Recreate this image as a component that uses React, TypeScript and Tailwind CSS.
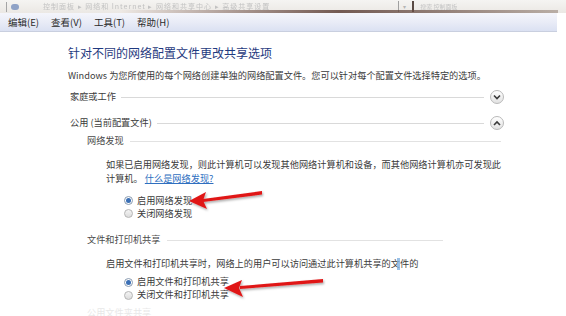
import React from 'react'

const cjk = { fontFamily: '"Noto Sans CJK SC", "Noto Sans", sans-serif' }

function Chevron({ up }: { up?: boolean }) {
  return (
    <div className="w-[14px] h-[14px] rounded-full border border-[#b9b9b9] bg-gradient-to-b from-[#ffffff] to-[#e2e2e2] flex items-center justify-center shrink-0">
      <svg width="8" height="6" viewBox="0 0 8 6">
        <path
          d={up ? 'M1 5 L4 2 L7 5' : 'M1 1.5 L4 4.5 L7 1.5'}
          fill="none"
          stroke="#3a3a3a"
          strokeWidth="1.6"
        />
      </svg>
    </div>
  )
}

function SectionRow({ label, up, end }: { label: string; up?: boolean; end: number }) {
  return (
    <div className="flex items-center h-[16px]" style={{ width: end }}>
      <span className="text-[9.2px] text-[#3b3b3b] whitespace-nowrap">{label}</span>
      <div className="flex-1 h-px bg-[#d9d9d9] ml-[5px] mr-[6px]"></div>
      <Chevron up={up} />
    </div>
  )
}

function GroupRow({ label, end }: { label: string; end: number }) {
  return (
    <div className="flex items-center h-[14px]" style={{ width: end }}>
      <span className="text-[9.2px] text-[#4a4a4a] whitespace-nowrap">{label}</span>
      <div className="flex-1 h-px bg-[#e2e2e2] ml-[6px]"></div>
    </div>
  )
}

function Radio({ checked, label }: { checked?: boolean; label: string }) {
  return (
    <div className="flex items-center h-[13px] gap-[4px]">
      <div
        className={
          checked
            ? 'w-[9px] h-[9px] rounded-full border border-[#8a9bb0] bg-white flex items-center justify-center'
            : 'w-[9px] h-[9px] rounded-full border border-[#b5b5b5] bg-gradient-to-b from-[#f4f4f4] to-[#dcdcdc]'
        }
      >
        {checked && <div className="w-[5px] h-[5px] rounded-full bg-[#3a6fb5]"></div>}
      </div>
      <span className="text-[9.2px] text-[#3b3b3b] whitespace-nowrap">{label}</span>
    </div>
  )
}

export default function App() {
  return (
    <div className="w-[566px] h-[316px] bg-white overflow-hidden relative" style={cjk}>
      {/* window chrome strip */}
      <div className="h-[13px] bg-gradient-to-b from-[#f5f4f2] to-[#ebe8e4] flex items-center relative overflow-hidden">
        <div className="w-px h-[10px] bg-[#a5a5a5] ml-[6px]"></div>
        <div className="w-[8px] h-[6px] bg-[#8fa2c6] ml-[4px] rounded-sm"></div>
        <span className="text-[7px] text-[#c2c2c2] ml-[24px] whitespace-nowrap tracking-[1px] blur-[0.4px]">
          控制面板 ▸ 网络和 Internet ▸ 网络和共享中心 ▸ 高级共享设置
        </span>
        <div className="w-px h-[11px] bg-[#a0a0a0] ml-[128px]"></div>
        <span className="text-[6px] text-[#b5b5b5] ml-[4px]">▾</span>
        <div className="w-[2px] h-[11px] bg-[#5a4a44] ml-[6px]"></div>
        <span className="text-[6px] text-[#c5c5c5] ml-[6px] whitespace-nowrap blur-[0.4px]">搜索 控制面板</span>
        <div className="absolute left-[120px] right-[8px] bottom-0 h-[3px] bg-gradient-to-r from-[#efe9e4] via-[#4a2a22] to-[#a89a90] opacity-75"></div>
      </div>

      {/* menu bar */}
      <div className="w-[557px] h-[19px] bg-gradient-to-b from-[#f4f5fb] via-[#e9ecf7] to-[#dbe1f2] border-b border-[#c9cfdf] flex items-center text-[9.5px] text-[#2a2a2a]">
        <span className="ml-[8px]">编辑(E)</span>
        <span className="ml-[12px]">查看(V)</span>
        <span className="ml-[12px]">工具(T)</span>
        <span className="ml-[12px]">帮助(H)</span>
      </div>

      {/* content */}
      <div className="pl-[68px]">
        <div className="mt-[13px] text-[12px] leading-[16px] text-[#1f3a80] whitespace-nowrap">
          针对不同的网络配置文件更改共享选项
        </div>
        <div className="mt-[7px] text-[9.2px] leading-[14px] text-[#3b3b3b] whitespace-nowrap">
          Windows 为您所使用的每个网络创建单独的网络配置文件。您可以针对每个配置文件选择特定的选项。
        </div>

        <div className="mt-[7px] ml-[2px]">
          <SectionRow label="家庭或工作" end={434} />
        </div>
        <div className="mt-[10px] ml-[2px]">
          <SectionRow label="公用 (当前配置文件)" up end={434} />
        </div>

        <div className="mt-[3px] ml-[19px]">
          <GroupRow label="网络发现" end={414} />
        </div>
        <div className="mt-[10px] ml-[38px] text-[9.2px] leading-[13.5px] text-[#3b3b3b] whitespace-nowrap">
          如果已启用网络发现，则此计算机可以发现其他网络计算机和设备，而其他网络计算机亦可发现此
          <br />
          计算机。 <span className="text-[#2f6fbf] underline">什么是网络发现?</span>
        </div>
        <div className="mt-[9px] ml-[56px]">
          <Radio checked label="启用网络发现" />
          <Radio label="关闭网络发现" />
        </div>

        <div className="mt-[13px] ml-[19px]">
          <GroupRow label="文件和打印机共享" end={356} />
        </div>
        <div className="mt-[10px] ml-[38px] text-[9.2px] leading-[13.5px] text-[#3b3b3b] whitespace-nowrap relative">
          启用文件和打印机共享时，网络上的用户可以访问通过此计算机共享的文件的
          <span className="absolute left-[291px] top-[1px] w-[3px] h-[12px] bg-[#7fb0e0] opacity-80"></span>
        </div>
        <div className="mt-[5px] ml-[56px]">
          <Radio checked label="启用文件和打印机共享" />
          <Radio label="关闭文件和打印机共享" />
        </div>
        <div className="mt-[4px] ml-[19px] text-[9.2px] leading-[13px] text-[#e8e8e8] whitespace-nowrap">
          公用文件夹共享
        </div>
      </div>

      {/* red arrows drawn over the content */}
      <svg className="absolute left-0 top-0 pointer-events-none" width="566" height="316">
        <defs>
          <filter id="sh" x="-10%" y="-50%" width="120%" height="200%">
            <feDropShadow dx="1" dy="1.5" stdDeviation="1" floodColor="#000" floodOpacity="0.35" />
          </filter>
        </defs>
        <g filter="url(#sh)" fill="#e01818" stroke="none">
          <path d="M262 191 L262 194.5 L203 202 L203 199 Z" />
          <path d="M189 201 L206 192 L203 200.5 L207 209 Z" />
          <path d="M323 279 L323 282.5 L240 289 L240 286 Z" />
          <path d="M224 288 L242 280 L239 288 L243 297 Z" />
        </g>
      </svg>
    </div>
  )
}
